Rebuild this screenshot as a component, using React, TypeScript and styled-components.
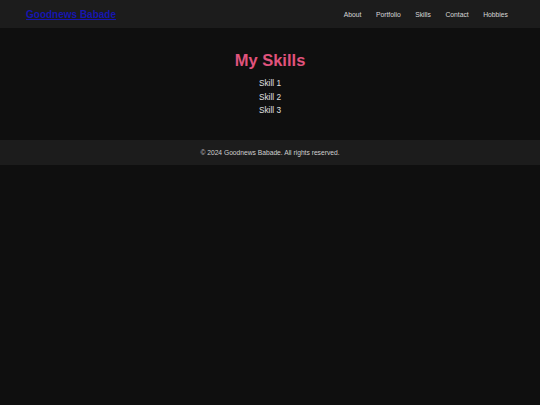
import styled, { createGlobalStyle } from "styled-components";

const GlobalStyle = createGlobalStyle`
  html, body {
    margin: 0;
    padding: 0;
    background: #0f0f0f;
    font-family: "Liberation Sans", Arial, sans-serif;
  }
`;

const navItems = ["About", "Portfolio", "Skills", "Contact", "Hobbies"];
const skills = ["Skill 1", "Skill 2", "Skill 3"];

const Header = styled.header`
  height: 28px;
  display: flex;
  align-items: center;
  justify-content: space-between;
  padding: 0 32px 0 26px;
  background: #1c1c1c;
`;

const Logo = styled.a`
  font-size: 10px;
  font-weight: bold;
  color: #1616b0;
  text-decoration: underline;
  text-decoration-thickness: 1px;
`;

const Nav = styled.nav`
  display: flex;
  gap: 14.5px;
`;

const NavLink = styled.a`
  font-size: 6.75px;
  color: #d8d8d8;
  text-decoration: none;
`;

const Main = styled.main`
  padding: 22px 0 22px;
  text-align: center;
`;

const Title = styled.h1`
  margin: 0 0 7px;
  font-size: 16.5px;
  line-height: 20px;
  font-weight: bold;
  color: #e0537d;
`;

const SkillList = styled.ul`
  list-style: none;
  margin: 0;
  padding: 0;
`;

const SkillItem = styled.li`
  font-size: 8.25px;
  line-height: 13.5px;
  color: #e0e0e0;
`;

const Footer = styled.footer`
  height: 25px;
  display: flex;
  align-items: center;
  justify-content: center;
  background: #1c1c1c;
  font-size: 6.7px;
  color: #d0d0d0;
`;

export default function App() {
  return (
    <>
      <GlobalStyle />
      <Header>
        <Logo href="#">Goodnews Babade</Logo>
        <Nav>
          {navItems.map((item) => (
            <NavLink key={item} href="#">
              {item}
            </NavLink>
          ))}
        </Nav>
      </Header>
      <Main>
        <Title>My Skills</Title>
        <SkillList>
          {skills.map((s) => (
            <SkillItem key={s}>{s}</SkillItem>
          ))}
        </SkillList>
      </Main>
      <Footer>© 2024 Goodnews Babade. All rights reserved.</Footer>
    </>
  );
}
